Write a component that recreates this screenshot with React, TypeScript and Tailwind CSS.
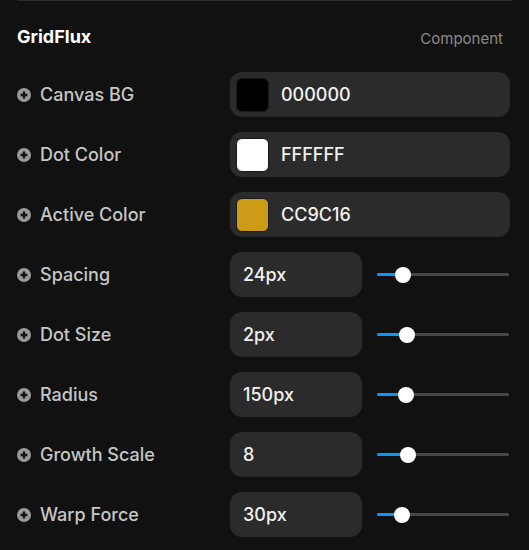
import React from "react";

const PlusIcon = () => (
  <svg width="14" height="14" viewBox="0 0 14 14" className="shrink-0">
    <circle cx="7" cy="7" r="7" fill="#9a9a9a" />
    <path d="M7 3.6V10.4M3.6 7H10.4" stroke="#141414" strokeWidth="2.4" strokeLinecap="butt" />
  </svg>
);

const Label = ({ text }: { text: string }) => (
  <div className="flex items-center gap-[9px] text-[18px] font-medium text-[#c6c6c6]">
    <PlusIcon />
    <span>{text}</span>
  </div>
);

const ColorRow = ({ label, color, value }: { label: string; color: string; value: string }) => (
  <div className="grid grid-cols-[213px_280px] items-center h-[45px]">
    <Label text={label} />
    <div className="flex items-center h-[45px] rounded-[12px] bg-[#2b2b2b] pl-[6px] gap-[12px]">
      <div
        className="w-[33px] h-[34px] rounded-[6px] border border-[#1a1a1a]"
        style={{ backgroundColor: color }}
      />
      <span className="text-[18px] font-medium text-[#f0f0f0]">{value}</span>
    </div>
  </div>
);

const SliderRow = ({ label, value, pos }: { label: string; value: string; pos: number }) => (
  <div className="grid grid-cols-[213px_280px] items-center h-[45px]">
    <Label text={label} />
    <div className="grid grid-cols-[132px_132px] gap-[15px] items-center">
      <div className="flex items-center h-[45px] rounded-[12px] bg-[#2b2b2b] pl-[13px] text-[18px] font-medium text-[#f0f0f0]">
        {value}
      </div>
      <div className="relative h-[16px] flex items-center">
        <div className="h-[3px] w-full rounded-full bg-[#474747]" />
        <div className="absolute left-0 h-[3px] rounded-full bg-[#0a95ff]" style={{ width: pos }} />
        <div
          className="absolute w-[16px] h-[16px] rounded-full bg-white"
          style={{ left: pos - 8 }}
        />
      </div>
    </div>
  </div>
);

export default function App() {
  return (
    <div
      className="w-[529px] h-[550px] bg-[#111111] px-[17px] overflow-hidden"
      style={{ fontFamily: "Inter, 'Noto Sans', sans-serif" }}
    >
      <div className="border-t border-[#2c2c2c]">
        <div className="flex items-center justify-between h-[71px]">
          <span className="text-[18px] font-bold text-white">GridFlux</span>
          <span className="text-[15px] text-[#8a8a8a] mr-[9px] pt-[5px]">Component</span>
        </div>
        <div className="flex flex-col gap-[15px]">
          <ColorRow label="Canvas BG" color="#000000" value="000000" />
          <ColorRow label="Dot Color" color="#ffffff" value="FFFFFF" />
          <ColorRow label="Active Color" color="#cc9c16" value="CC9C16" />
          <SliderRow label="Spacing" value="24px" pos={26} />
          <SliderRow label="Dot Size" value="2px" pos={30} />
          <SliderRow label="Radius" value="150px" pos={29} />
          <SliderRow label="Growth Scale" value="8" pos={31} />
          <SliderRow label="Warp Force" value="30px" pos={25} />
        </div>
      </div>
    </div>
  );
}
